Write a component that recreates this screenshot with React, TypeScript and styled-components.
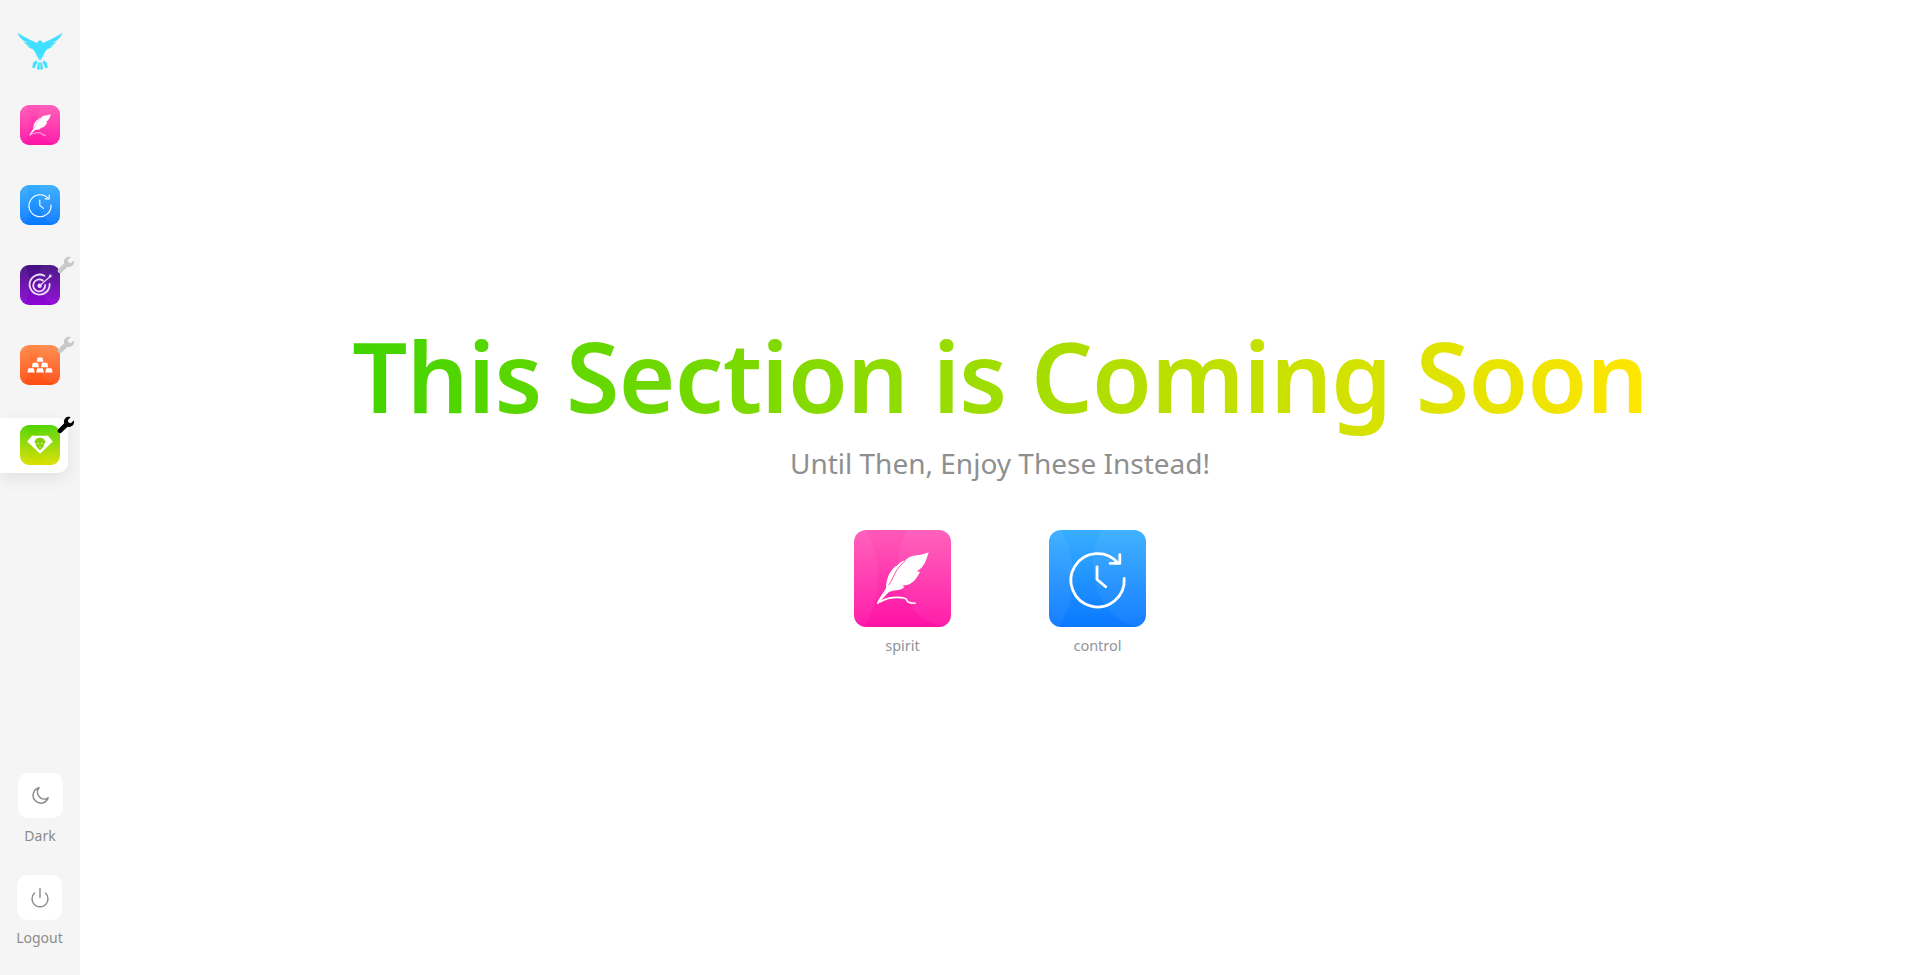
import React from "react";
import styled, { createGlobalStyle } from "styled-components";

const Global = createGlobalStyle`
  html, body { margin: 0; padding: 0; height: 100%; background: #fff; }
  #root { height: 100%; }
  * { box-sizing: border-box; }
  body { font-family: "Noto Sans", "Open Sans", "Liberation Sans", sans-serif; overflow: hidden; }
`;

const Page = styled.div`
  display: flex;
  width: 1920px;
  height: 975px;
`;

const Sidebar = styled.aside`
  width: 80px;
  height: 100%;
  flex: none;
  background: #f5f5f5;
  display: flex;
  flex-direction: column;
  padding-top: 32px;
`;

const Logo = styled.div`
  height: 40px;
  margin-bottom: 33px;
  padding-left: 18px;
  display: flex;
`;

const NavList = styled.nav`
  display: flex;
  flex-direction: column;
  gap: 40px;
`;

const NavItem = styled.div<{ $active?: boolean }>`
  position: relative;
  width: 68px;
  height: 40px;
  padding-left: 20px;
  &::before {
    content: "";
    display: ${(p) => (p.$active ? "block" : "none")};
    position: absolute;
    left: 0;
    top: -7px;
    width: 68px;
    height: 55px;
    background: #fff;
    border-radius: 0 10px 10px 0;
    box-shadow: 0 6px 16px rgba(0, 0, 0, 0.08);
  }
`;

const AppTile = styled.div<{ $from: string; $to: string; $size: number; $radius: number }>`
  position: relative;
  width: ${(p) => p.$size}px;
  height: ${(p) => p.$size}px;
  border-radius: ${(p) => p.$radius}px;
  background: linear-gradient(180deg, ${(p) => p.$from}, ${(p) => p.$to});
  overflow: hidden;
  svg.glyph { position: absolute; left: 0; top: 0; width: 100%; height: 100%; z-index: 1; }
  &::before {
    content: "";
    position: absolute;
    left: -60%;
    top: -20%;
    width: 85%;
    height: 135%;
    border-radius: 50%;
    background: rgba(255, 255, 255, 0.05);
  }
  &::after {
    content: "";
    position: absolute;
    right: -50%;
    top: -28%;
    width: 105%;
    height: 128%;
    border-radius: 50%;
    background: rgba(255, 255, 255, 0.05);
  }
`;

const WrenchBadge = styled.svg<{ $dark?: boolean }>`
  position: absolute;
  left: 57px;
  top: -9px;
  width: 18px;
  height: 18px;
  fill: ${(p) => (p.$dark ? "#000" : "#c9c9c9")};
`;

const BottomStack = styled.div`
  margin-top: auto;
  display: flex;
  flex-direction: column;
  padding-bottom: 27px;
`;

const ControlGroup = styled.div<{ $shift: number }>`
  display: flex;
  flex-direction: column;
  align-items: center;
  width: 80px;
  margin-bottom: 29px;
  padding-right: ${(p) => p.$shift}px;
  &:last-child { margin-bottom: 0; }
`;

const ControlButton = styled.button`
  width: 45px;
  height: 45px;
  border: 0;
  padding: 0;
  border-radius: 10px;
  background: #fff;
  display: flex;
  align-items: center;
  justify-content: center;
  color: #8a8a8a;
`;

const ControlLabel = styled.span`
  margin-top: 8px;
  font-size: 14px;
  line-height: 20px;
  color: #8c8c8c;
`;

const Main = styled.main`
  flex: 1;
  display: flex;
  flex-direction: column;
  align-items: center;
  padding-top: 313px;
`;

const Title = styled.h1`
  margin: 0;
  font-family: "Noto Sans", sans-serif;
  font-size: 97px;
  line-height: 124px;
  font-weight: 600;
  letter-spacing: -0.75px;
  white-space: nowrap;
  background: linear-gradient(90deg, #41d400, #ffe600);
  -webkit-background-clip: text;
  background-clip: text;
  color: transparent;
`;

const Subtitle = styled.p`
  margin: 7px 0 0;
  font-size: 28px;
  line-height: 38px;
  color: #8f8f8f;
`;

const Shortcuts = styled.div`
  display: flex;
  gap: 98px;
  margin-top: 48px;
`;

const Shortcut = styled.div`
  display: flex;
  flex-direction: column;
  align-items: center;
  gap: 8px;
`;

const ShortcutLabel = styled.span`
  font-size: 14.5px;
  line-height: 20px;
  color: #8f959c;
`;

const Feather = () => (
  <svg className="glyph" viewBox="0 0 100 100" fill="#fff">
    <path d="M77 23C71 25.500 66 26 61 26.500C58 27.500 55 29 53 31C50 32.500 47 33.500 45 36C41 38 38 42 35.500 47C34 51 33 55 33 60C30 65 26 70 23.500 75.500L25 76.500C28 72 32 68 36 64C39 62.500 43 62 47 61.500C49 61 51 60 52 58.500L49.500 57.500C53 57 56 56.500 58 55.500C60 54 62 53 63 51C65 48.500 67 46 68 43L64.500 42.500C67 41 70 39 71 37L73 34C75 30 76 26 77 23Z" />
    <path d="M53 31.500C48 36 43 42 41 47.500C39.500 51 37.500 54 36 56.500" fill="none" stroke="#ff4db3" strokeWidth="1" strokeLinecap="round" />
    <path d="M27 74C32 71 38 69.500 45 69.500C51 69.500 54 70 54.500 72.500C55 75 58 75.200 63 75.500" fill="none" stroke="#fff" strokeWidth="1.700" strokeLinecap="round" />
  </svg>
);

const Clock = () => (
  <svg className="glyph" viewBox="0 0 100 100" fill="none" stroke="#fff" strokeWidth="2.900" strokeLinecap="round" strokeLinejoin="round">
    <path d="M71 34A27.500 27.500 0 1 0 77.500 50" />
    <path d="M63 34.500H73V25.500" />
    <path d="M49.500 38V51L58.500 58.500" />
  </svg>
);

const Target = () => (
  <svg className="glyph" viewBox="0 0 100 100" fill="none" stroke="#eadcf6" strokeWidth="4.600" strokeLinecap="round">
    <path d="M61 27A25 25 0 1 0 74 47" />
    <path d="M57 39A15 15 0 1 0 63 50" />
    <circle cx="49" cy="52" r="5.500" fill="#eadcf6" stroke="none" />
    <path d="M50 51 74 30" strokeWidth="3" />
    <path d="M72 27L76 22L77 26L81 26.500L77 31L72.500 31Z" fill="#eadcf6" stroke="none" />
  </svg>
);

const Gold = () => (
  <svg className="glyph" viewBox="0 0 100 100" fill="#fff">
    <path d="M44 31H56L58.500 42H41.500Z" />
    <path d="M32 44.500H45L47.500 55.500H29.500Z" />
    <path d="M55 44.500H68L70.500 55.500H52.500Z" />
    <path d="M21 58H34L37 69H18.500Z" />
    <path d="M43 58H57L59.500 69H40.500Z" />
    <path d="M66 58H79L81.500 69H63Z" />
  </svg>
);

const Gem = () => (
  <svg className="glyph" viewBox="0 0 100 100">
    <path fill="#fff" d="M30 27H70L82 41L50 72L18 41Z" />
    <path fill="#84d000" d="M50 32C55 32 59 34 61 37L64 43L60 47L59 54L50 63L41 54L40 47L36 43L39 37C41 34 45 32 50 32Z" />
    <path fill="#fff" d="M43 43L48 46L46 49ZM57 43L52 46L54 49ZM48 53H52L50 57Z" />
  </svg>
);

const Wrench = ({ dark }: { dark?: boolean }) => (
  <WrenchBadge $dark={dark} viewBox="0 0 24 24">
    <path d="M22.600 6.400c-.1-.3-.5-.4-.7-.2l-3.400 3.400-3.200-.9-.9-3.200 3.400-3.400c.2-.2.1-.6-.2-.7-2.300-.6-4.800-.1-6.500 1.600-1.800 1.800-2.300 4.400-1.500 6.700L1.700 17.600c-1.100 1.100-1.100 3.100.1 4.400 1.300 1.200 3.300 1.200 4.400.1l7.900-7.900c2.300.8 4.900.3 6.700-1.500 1.700-1.700 2.300-4.400 1.800-6.300z" />
  </WrenchBadge>
);

const BirdLogo = () => (
  <svg width="45" height="40" viewBox="0 0 45 40" fill="#3fe0ff" stroke="#3fe0ff" strokeWidth="0.4">
    <path d="M22 8.500L24 9.500L25 11.500C27 10 30 9 33 7.500C37 5.500 41 3.500 44 1C43 4 41 6.500 38.500 8.500L33 11C36 11 37 10.500 38 10C36.500 12 34 13.500 31.500 13.800C33 14 34 13.800 35 13.500C33 15.500 31 16.500 29.500 16.800C27.500 18.500 26 21 25 24L22 28.500L19 24C18 21 16.500 18.500 14.500 16.800C13 16.500 11 15.500 9 13.500C10 13.800 11 14 12.500 13.800C10 13.500 7.500 12 6 10C7 10.500 8 11 11 11L5.500 8.500C3 6.500 1 4 0 1C3 3.500 7 5.500 11 7.500C14 9 17 10 19 11.500L20 9.500Z" />
    <path d="M15.500 30.500L18.500 28.500L19 30.500L16.500 36L14.500 35.500ZM28.500 30.500L25.500 28.500L25 30.500L27.500 36L29.500 35.500ZM20.300 30.500H21.500V37.500L19 37ZM23.700 30.500H22.500V37.500L25 37Z" />
  </svg>
);

const Moon = () => (
  <svg width="22" height="22" viewBox="0 0 24 24" fill="none" stroke="currentColor" strokeWidth="1.600" strokeLinecap="round" strokeLinejoin="round">
    <path d="M11 3a8.500 8.500 0 1 0 10 11 7.500 7.500 0 0 1-10-11z" />
  </svg>
);

const Power = () => (
  <svg width="24" height="24" viewBox="0 0 24 24" fill="none" stroke="currentColor" strokeWidth="1.400" strokeLinecap="round">
    <path d="M12 2.500v9" />
    <path d="M6.500 7a8 8 0 1 0 11 0" />
  </svg>
);

const nav = [
  { from: "#ff5ab8", to: "#ff12a5", icon: <Feather /> },
  { from: "#38aeff", to: "#0a78ff", icon: <Clock /> },
  { from: "#42107f", to: "#8f06d8", icon: <Target />, wrench: "light" },
  { from: "#ff8a4a", to: "#ff4d12", icon: <Gold />, wrench: "light" },
  { from: "#4fd400", to: "#dde000", icon: <Gem />, wrench: "dark", active: true },
];

export default function App() {
  return (
    <Page>
      <Global />
      <Sidebar>
        <Logo><BirdLogo /></Logo>
        <NavList>
          {nav.map((n, i) => (
            <NavItem key={i} $active={n.active}>
              <AppTile $from={n.from} $to={n.to} $size={40} $radius={9}>{n.icon}</AppTile>
              {n.wrench && <Wrench dark={n.wrench === "dark"} />}
            </NavItem>
          ))}
        </NavList>
        <BottomStack>
          <ControlGroup $shift={0}>
            <ControlButton aria-label="Dark"><Moon /></ControlButton>
            <ControlLabel>Dark</ControlLabel>
          </ControlGroup>
          <ControlGroup $shift={1}>
            <ControlButton aria-label="Logout"><Power /></ControlButton>
            <ControlLabel>Logout</ControlLabel>
          </ControlGroup>
        </BottomStack>
      </Sidebar>
      <Main>
        <Title>This Section is Coming Soon</Title>
        <Subtitle>Until Then, Enjoy These Instead!</Subtitle>
        <Shortcuts>
          <Shortcut>
            <AppTile $from="#ff5ab8" $to="#ff12a5" $size={97} $radius={12}><Feather /></AppTile>
            <ShortcutLabel>spirit</ShortcutLabel>
          </Shortcut>
          <Shortcut>
            <AppTile $from="#38aeff" $to="#0a78ff" $size={97} $radius={12}><Clock /></AppTile>
            <ShortcutLabel>control</ShortcutLabel>
          </Shortcut>
        </Shortcuts>
      </Main>
    </Page>
  );
}
